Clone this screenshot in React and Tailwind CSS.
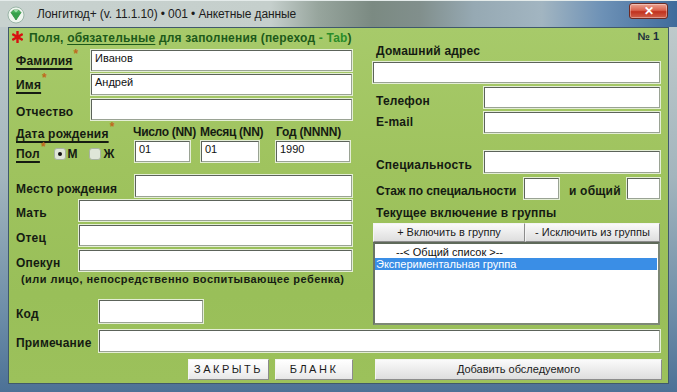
import React from "react";

function Field({ className = "", value = "" }) {
  return (
    <div
      className={
        "bg-white border border-[#9aa394] border-t-[#5c635a] border-l-[#5c635a] shadow-[0_0_0_1px_#e4eed6] text-[11px] text-[#111] pl-[3px] flex items-start pt-[1px] leading-[13px] " +
        className
      }
    >
      {value}
    </div>
  );
}

function Label({ children, className = "" }) {
  const t = className.includes("tracking") ? "" : "tracking-[0.2px] ";
  return (
    <span className={"text-[12px] font-bold text-[#151b12] " + t + className}>
      {children}
    </span>
  );
}

function ReqLabel({ children }) {
  return (
    <span className="flex items-start">
      <span className="text-[12px] font-bold text-[#151b12] tracking-[0.2px] underline decoration-[1.5px] underline-offset-[3px]">
        {children}
      </span>
      <span className="text-[12px] font-bold text-[#c06a1c] leading-[8px] ml-[1px] -mt-[2px]">*</span>
    </span>
  );
}

function Btn({ children, className = "" }) {
  return (
    <div
      className={
        "flex items-center justify-center bg-[linear-gradient(180deg,#fafafa_0%,#ececec_50%,#dedede_100%)] border border-[#f4f4f4] border-b-[#8c8c8c] border-r-[#8c8c8c] text-[11px] text-[#1b1b1b] " +
        className
      }
    >
      {children}
    </div>
  );
}

function Radio({ checked }) {
  return (
    <span className="w-[12px] h-[12px] rounded-[3px] bg-[#dfe6d8] border border-[#a9b3a2] flex items-center justify-center">
      {checked && <span className="w-[4px] h-[4px] rounded-full bg-[#111]" />}
    </span>
  );
}

export default function App() {
  return (
    <div className="w-[677px] h-[392px] overflow-hidden flex flex-col font-['Liberation_Sans',Arial,sans-serif] bg-[linear-gradient(180deg,#c3cdcd_0%,#a3b5bd_45%,#6d8da8_80%,#4c7196_100%)]">
      {/* Title bar */}
      <div className="h-[27px] flex items-center bg-[linear-gradient(90deg,#c8d2cf_0%,#c5cfcc_40%,#97a59d_47%,#7b8a82_55%,#818f8c_62%,#96a9b3_70%,#a2b5c1_80%,#6d91b6_89%,#3f6b9b_100%)] border-t border-[#e4ebea]">
        <svg width="18" height="18" viewBox="0 0 18 18" className="ml-[7px] mt-[1px]">
          <circle cx="9" cy="9" r="8" fill="#eef6ee" stroke="#8aa89a" strokeWidth="0.8" />
          <polygon points="4,6.5 6.5,4 11.5,4 14,6.5 9,14" fill="#4cb860" stroke="#2f7f3d" strokeWidth="0.7" />
          <polygon points="4,6.5 14,6.5 9,14" fill="#37a04b" />
          <polygon points="6.5,4 11.5,4 9,6.5" fill="#9fe0a8" />
        </svg>
        <span className="ml-[12px] text-[12px] text-[#1d1d1d] tracking-[-0.1px]">
          Лонгитюд+ (v. 11.1.10) • 001 • Анкетные данные
        </span>
        <div className="ml-auto mr-[9px] mt-[-6px] w-[39px] h-[16px] rounded-[3px] border border-[#6e2a22] bg-[linear-gradient(180deg,#eba392_0%,#d9634e_45%,#c1311e_55%,#d0614a_100%)] flex items-center justify-center shadow-[inset_0_0_0_1px_rgba(255,255,255,0.35)]">
          <span className="text-white text-[12px] font-bold leading-none">✕</span>
        </div>
      </div>

      {/* Client area */}
      <div className="mx-[8px] h-[357px] border border-[#40596b] bg-[linear-gradient(180deg,#a7ca6a_0%,#9fc35e_40%,#99bf59_75%,#9cc15b_100%)] flex flex-col">
        <div className="flex">
          {/* Left column */}
          <div className="w-[351px] flex flex-col pl-[7px] pr-[8px]">
            <div className="mt-[1px] h-[18px] flex items-center">
              <svg width="11" height="12" viewBox="0 0 11 12" className="-ml-[4px] mr-[6px] -mt-[2px]">
                <g stroke="#d81010" strokeWidth="2.4" strokeLinecap="butt">
                  <line x1="5.5" y1="0" x2="5.5" y2="12" />
                  <line x1="0.3" y1="3" x2="10.7" y2="9" />
                  <line x1="0.3" y1="9" x2="10.7" y2="3" />
                </g>
              </svg>
              <span className="text-[12px] font-bold text-[#1d5a1a] tracking-[0.2px]">
                Поля, <span className="underline underline-offset-[2px]">обязательные</span> для заполнения (переход <span className="text-[#2b8d2a]">- Tab</span>)
              </span>
            </div>
            <div className="mt-[3px] h-[21px] flex items-center">
              <div className="w-[75px]"><ReqLabel>Фамилия</ReqLabel></div>
              <Field className="flex-1 h-[21px]" value="Иванов" />
            </div>
            <div className="mt-[3px] h-[21px] flex items-center">
              <div className="w-[75px]"><ReqLabel>Имя</ReqLabel></div>
              <Field className="flex-1 h-[21px]" value="Андрей" />
            </div>
            <div className="mt-[4px] h-[21px] flex items-center">
              <div className="w-[75px] mt-[3px]"><Label>Отчество</Label></div>
              <Field className="flex-1 h-[21px]" />
            </div>
            <div className="mt-[3px] h-[18px] flex items-center">
              <div className="w-[117px] mt-[3px]"><ReqLabel>Дата рождения</ReqLabel></div>
              <div className="w-[67px] text-[12px] font-bold text-[#151b12] tracking-[-0.3px]">Число (NN)</div>
              <div className="w-[76px] text-[12px] font-bold text-[#151b12] tracking-[-0.3px]">Месяц (NN)</div>
              <div className="text-[12px] font-bold text-[#151b12] tracking-[-0.2px]">Год (NNNN)</div>
            </div>
            <div className="h-[21px] flex items-center">
              <div className="w-[117px] flex items-center mt-[4px]">
                <ReqLabel>Пол</ReqLabel>
                <span className="ml-[8px]"><Radio checked /></span>
                <span className="ml-[2px] text-[12px] font-bold text-[#151b12]">М</span>
                <span className="ml-[11px]"><Radio /></span>
                <span className="ml-[3px] text-[12px] font-bold text-[#151b12]">Ж</span>
              </div>
              <div className="w-[67px] pl-[2px]"><Field className="w-[55px] h-[21px]" value="01" /></div>
              <div className="w-[76px] pl-[1px]"><Field className="w-[58px] h-[21px]" value="01" /></div>
              <Field className="w-[74px] h-[21px]" value="1990" />
            </div>
            <div className="mt-[13px] h-[22px] flex items-center">
              <div className="w-[119px] mt-[3px]"><Label>Место рождения</Label></div>
              <Field className="flex-1 h-[22px]" />
            </div>
            <div className="mt-[3px] h-[21px] flex items-center">
              <div className="w-[63px] mt-[3px]"><Label>Мать</Label></div>
              <Field className="flex-1 h-[21px]" />
            </div>
            <div className="mt-[4px] h-[21px] flex items-center">
              <div className="w-[63px] mt-[3px]"><Label>Отец</Label></div>
              <Field className="flex-1 h-[21px]" />
            </div>
            <div className="mt-[4px] h-[21px] flex items-center">
              <div className="w-[63px] mt-[3px]"><Label>Опекун</Label></div>
              <Field className="flex-1 h-[21px]" />
            </div>
            <div className="h-[12px] flex items-center pl-[5px]">
              <span className="text-[11px] font-bold text-[#151b12] tracking-[0.45px] leading-none mt-[4px]">
                (или лицо, непосредственно воспитывающее ребенка)
              </span>
            </div>
            <div className="mt-[17px] h-[23px] flex items-center">
              <div className="w-[83px] mt-[3px]"><Label>Код</Label></div>
              <Field className="w-[104px] h-[23px]" />
            </div>
          </div>

          {/* Right column */}
          <div className="flex-1 flex flex-col pl-[13px] pr-[8px]">
            <div className="mt-[1px] h-[14px] flex justify-end items-center">
              <span className="text-[11px] font-bold text-[#1c2f3c] mr-[1px]">№ 1</span>
            </div>
            <div className="h-[15px] flex items-center pl-[3px]">
              <Label>Домашний адрес</Label>
            </div>
            <Field className="mt-[4px] h-[21px]" />
            <div className="mt-[4px] h-[21px] flex items-center">
              <div className="w-[111px] pl-[3px] mt-[4px]"><Label>Телефон</Label></div>
              <Field className="flex-1 h-[21px]" />
            </div>
            <div className="mt-[4px] h-[21px] flex items-center">
              <div className="w-[111px] pl-[3px] mt-[-3px]"><Label>E-mail</Label></div>
              <Field className="flex-1 h-[21px]" />
            </div>
            <div className="mt-[18px] h-[22px] flex items-center">
              <div className="w-[111px] pl-[3px] mt-[3px]"><Label>Специальность</Label></div>
              <Field className="flex-1 h-[22px]" />
            </div>
            <div className="mt-[5px] h-[21px] flex items-center">
              <div className="w-[151px] pl-[3px] mt-[2px]"><Label className="tracking-[-0.1px]">Стаж по специальности</Label></div>
              <Field className="w-[35px] h-[21px]" />
              <div className="w-[68px] pl-[10px] mt-[2px]"><Label>и общий</Label></div>
              <Field className="flex-1 h-[21px]" />
            </div>
            <div className="mt-[6px] h-[16px] flex items-center pl-[3px]">
              <Label className="tracking-[0.15px]">Текущее включение в группы</Label>
            </div>
            <div className="mt-[2px] h-[19px] flex">
              <Btn className="w-[152px] h-[19px]">+ Включить в группу</Btn>
              <Btn className="flex-1 h-[19px]">- Исключить из группы</Btn>
            </div>
            <div className="h-[83px] bg-white border-2 border-[#7d8876] border-t-[#5f6a5a] border-l-[#6a7565] flex flex-col pt-[2px] text-[11px] leading-[12px]">
              <div className="pl-[21px] text-[#111]">--&lt; Общий список &gt;--</div>
              <div className="bg-[#3a8ee6] text-white pl-[1px] h-[12px] mr-[1px]">Экспериментальная группа</div>
            </div>
          </div>
        </div>

        {/* Full width rows */}
        <div className="mt-[5px] h-[22px] flex items-center pl-[7px] pr-[8px]">
          <div className="w-[83px] mt-[2px]"><Label>Примечание</Label></div>
          <Field className="flex-1 h-[22px]" />
        </div>
        <div className="mt-[7px] h-[21px] flex pr-[6px]">
          <Btn className="ml-[179px] w-[81px] h-[21px] tracking-[2.5px] bg-[linear-gradient(180deg,#ffffff_0%,#f3f3f3_60%,#e6e6e6_100%)]">ЗАКРЫТЬ</Btn>
          <Btn className="ml-[6px] w-[78px] h-[21px] tracking-[2.5px] bg-[linear-gradient(180deg,#ffffff_0%,#f3f3f3_60%,#e6e6e6_100%)]">БЛАНК</Btn>
          <Btn className="ml-[22px] flex-1 h-[21px]">Добавить обследуемого</Btn>
        </div>
      </div>
    </div>
  );
}
